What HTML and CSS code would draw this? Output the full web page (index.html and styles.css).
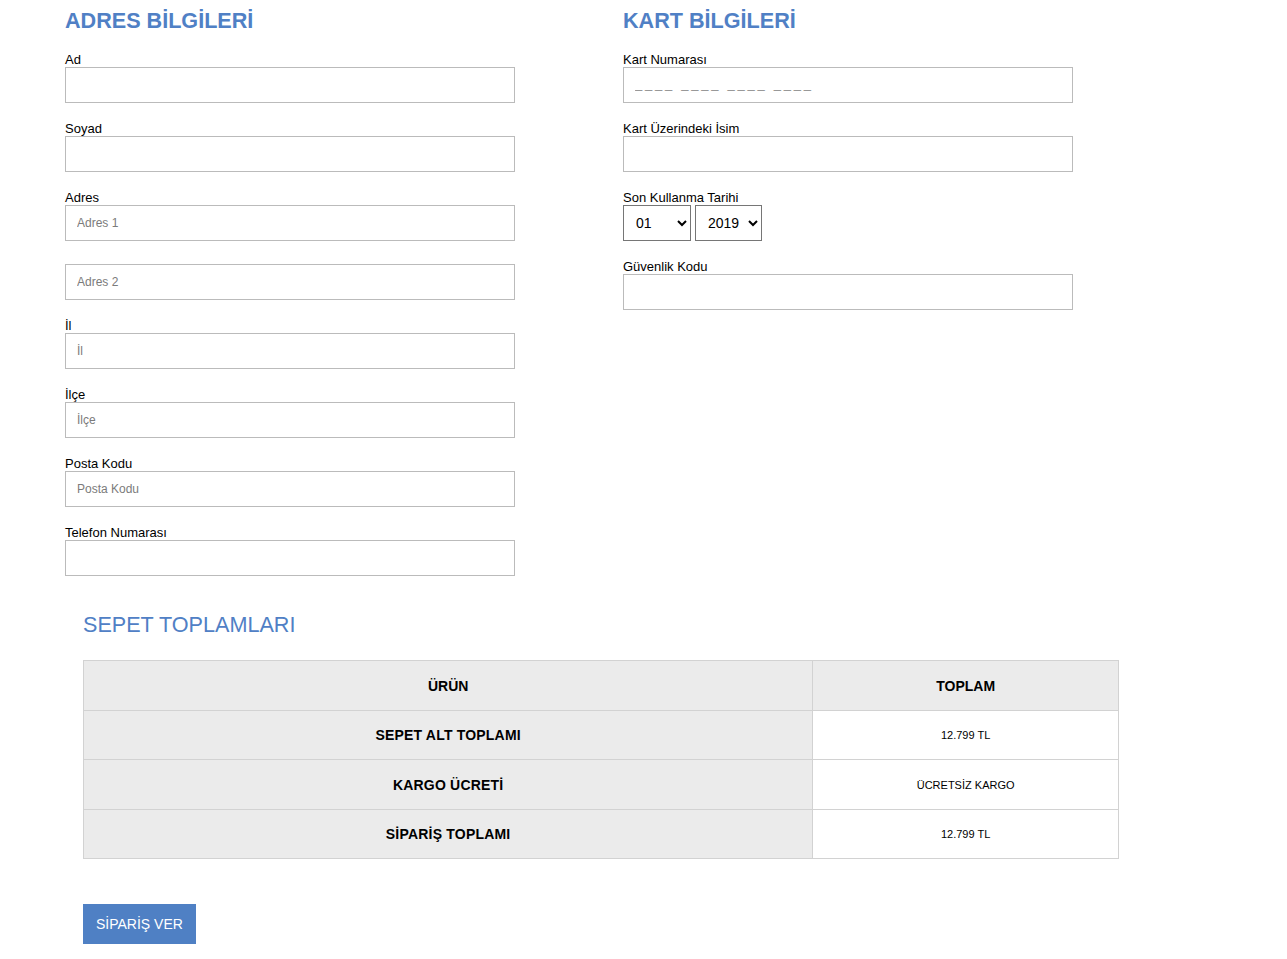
FILE: index.html
```html
<!DOCTYPE html>
<html lang="tr">
<head>
<meta charset="utf-8">
<title>Ödeme</title>
<link rel="stylesheet" href="styles.css">
</head>
<body>
<div class="page">
  <div class="columns">
    <section class="col">
      <h2 class="title">ADRES BİLGİLERİ</h2>
      <div class="field">
        <label class="lbl">Ad</label>
        <input class="inp" type="text">
      </div>
      <div class="field">
        <label class="lbl">Soyad</label>
        <input class="inp" type="text">
      </div>
      <div class="field">
        <label class="lbl">Adres</label>
        <input class="inp" type="text" placeholder="Adres 1">
        <input class="inp inp-second" type="text" placeholder="Adres 2">
      </div>
      <div class="field">
        <label class="lbl">İl</label>
        <input class="inp" type="text" placeholder="İl">
      </div>
      <div class="field">
        <label class="lbl">İlçe</label>
        <input class="inp" type="text" placeholder="İlçe">
      </div>
      <div class="field">
        <label class="lbl">Posta Kodu</label>
        <input class="inp" type="text" placeholder="Posta Kodu">
      </div>
      <div class="field">
        <label class="lbl">Telefon Numarası</label>
        <input class="inp" type="text">
      </div>
    </section>
    <section class="col">
      <h2 class="title">KART BİLGİLERİ</h2>
      <div class="field">
        <label class="lbl">Kart Numarası</label>
        <input class="inp inp-card" type="text" placeholder="____ ____ ____ ____">
      </div>
      <div class="field">
        <label class="lbl">Kart Üzerindeki İsim</label>
        <input class="inp" type="text">
      </div>
      <div class="field">
        <label class="lbl">Son Kullanma Tarihi</label>
        <div class="selects">
          <select class="sel sel-month"><option>01</option><option>02</option><option>03</option></select>
          <select class="sel sel-year"><option>2019</option><option>2020</option><option>2021</option></select>
        </div>
      </div>
      <div class="field">
        <label class="lbl">Güvenlik Kodu</label>
        <input class="inp" type="text">
      </div>
    </section>
  </div>

  <section class="totals">
    <h2 class="totals-title">SEPET TOPLAMLARI</h2>
    <table class="tbl">
      <thead>
        <tr><th class="c1">ÜRÜN</th><th class="c2">TOPLAM</th></tr>
      </thead>
      <tbody>
        <tr class="r1"><th class="c1">SEPET ALT TOPLAMI</th><td class="c2">12.799 TL</td></tr>
        <tr class="r2"><th class="c1">KARGO ÜCRETİ</th><td class="c2">ÜCRETSİZ KARGO</td></tr>
        <tr class="r3"><th class="c1">SİPARİŞ TOPLAMI</th><td class="c2">12.799 TL</td></tr>
      </tbody>
    </table>
    <button class="btn" type="button">SİPARİŞ VER</button>
  </section>
</div>
</body>
</html>
```

FILE: styles.css
```css
* { box-sizing: border-box; }

html, body {
  margin: 0;
  padding: 0;
  background: #fff;
}

body {
  font-family: "Liberation Sans", Arial, sans-serif;
  color: #000;
}

.page {
  padding-top: 8px;
}

.columns {
  display: flex;
  gap: 108px;
  padding-left: 65px;
}

.col {
  width: 450px;
}

.title {
  margin: 0 0 19px;
  font-size: 21.6px;
  line-height: 25px;
  font-weight: 700;
  color: #5080c5;
}

.field {
  margin-bottom: 18px;
}

.lbl {
  display: block;
  font-size: 13px;
  line-height: 15px;
  color: #000;
}

.inp {
  display: block;
  width: 450px;
  height: 36px;
  margin: 0;
  padding: 0 11px;
  border: 1px solid #bbbbbb;
  border-radius: 0;
  background: #fff;
  font-family: "Liberation Sans", Arial, sans-serif;
  font-size: 12px;
  color: #333;
  outline: none;
}

.inp::placeholder {
  color: #7b7b7b;
  opacity: 1;
}

.inp-second {
  margin-top: 23px;
}

.inp-card {
  font-size: 13px;
  letter-spacing: 2.75px;
  padding-bottom: 4px;
}

.inp-card::placeholder {
  color: #8a8a8a;
}

.selects {
  display: flex;
  gap: 4px;
}

.sel {
  height: 36px;
  margin: 0;
  padding: 0 0 0 8px;
  border: 1px solid #767676;
  border-radius: 0;
  background: #fff;
  font-family: "Liberation Sans", Arial, sans-serif;
  font-size: 14px;
  color: #000;
}

.sel-month { width: 68px; padding-left: 8px; }
.sel-year { width: 67px; padding-left: 8px; }

.totals {
  padding-left: 83px;
  padding-top: 18px;
}

.totals-title {
  margin: 0 0 23px;
  font-size: 21.6px;
  line-height: 25px;
  font-weight: 400;
  color: #5080c5;
}

.tbl {
  width: 1036px;
  border-collapse: collapse;
}

.tbl th, .tbl td {
  border: 1px solid #d2d2d2;
  text-align: center;
  vertical-align: middle;
  padding: 0;
}

.tbl thead th {
  height: 50px;
  background: #ebebeb;
  font-size: 14px;
  font-weight: 700;
}

.tbl tbody th {
  background: #ebebeb;
  font-size: 14px;
  font-weight: 700;
  letter-spacing: 0.2px;
}

.tbl tbody td {
  background: #fff;
  font-size: 11px;
}

.tbl .r1 th, .tbl .r1 td { height: 49px; }
.tbl .r2 th, .tbl .r2 td { height: 50px; }
.tbl .r3 th, .tbl .r3 td { height: 49px; }

.tbl .c1 { width: 730px; }
.tbl .c2 { width: 306px; }

.btn {
  display: block;
  margin-top: 45px;
  height: 40px;
  padding: 0 13px;
  border: none;
  border-radius: 0;
  background: #4f80c4;
  color: #fff;
  font-family: "Liberation Sans", Arial, sans-serif;
  font-size: 14px;
}
```
